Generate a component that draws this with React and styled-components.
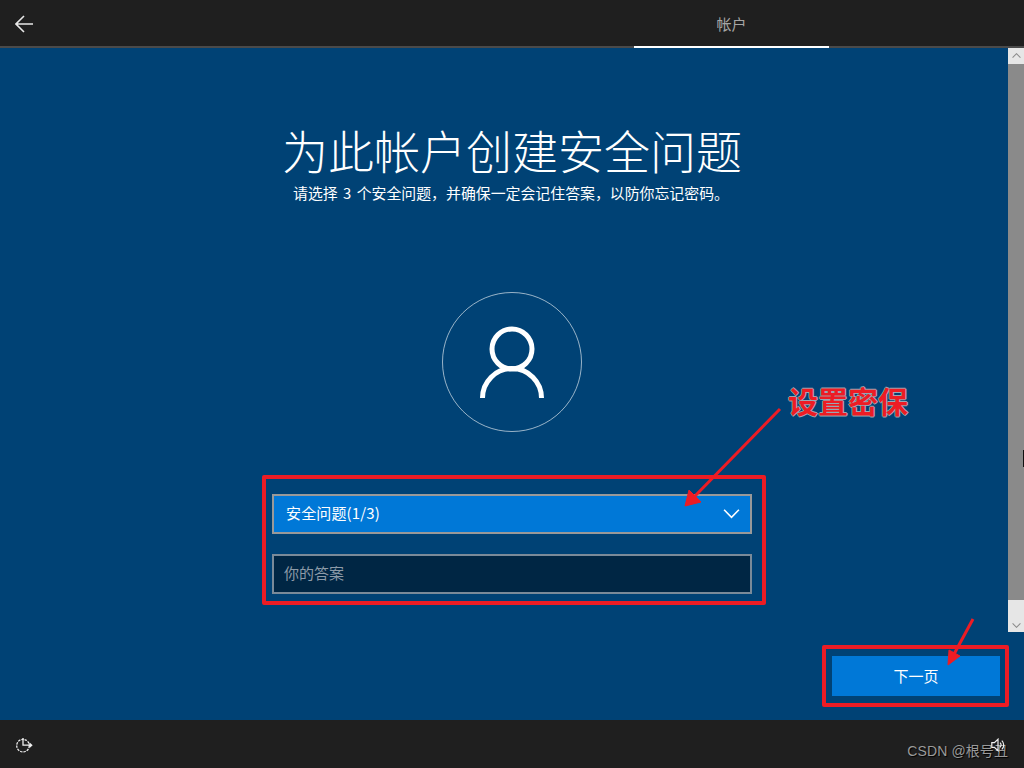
import React from 'react';
import styled, { createGlobalStyle } from 'styled-components';

const FONT = '"Noto Sans CJK SC", "Liberation Sans", sans-serif';
const RED = '#ed1c24';

const GlobalStyle = createGlobalStyle`
    html, body {
        margin: 0;
        padding: 0;
        background: #004275;
    }
    * {
        box-sizing: border-box;
    }
`;

const Page = styled.div`
    position: relative;
    width: 1024px;
    height: 768px;
    overflow: hidden;
    display: flex;
    flex-direction: column;
    background: #004275;
    color: #fff;
    font-family: ${FONT};
`;

const TopBar = styled.header`
    height: 48px;
    flex: none;
    display: flex;
    background: #1f1f1f;
    border-bottom: 2px solid #4a4a4a;
`;

const BackButton = styled.div`
    width: 48px;
    padding-top: 2px;
    display: flex;
    align-items: center;
    justify-content: center;
    color: #e8e8e8;
`;

const Tabs = styled.nav`
    margin-left: 586px;
    display: flex;
`;

const Tab = styled.div`
    width: 195px;
    height: 48px;
    margin-bottom: -2px;
    display: flex;
    align-items: center;
    justify-content: center;
    font-size: 15px;
    color: #a6a6a6;
    border-bottom: 2px solid #fff;
`;

const Body = styled.div`
    height: 584px;
    flex: none;
    display: flex;
`;

const Content = styled.main`
    flex: 1;
    display: flex;
    flex-direction: column;
    align-items: center;
    padding-top: 68px;
    padding-left: 16px;
`;

const Title = styled.h1`
    margin: 0 0 1px;
    font-size: 46px;
    line-height: 66px;
    font-weight: 300;
    white-space: nowrap;
`;

const Subtitle = styled.p`
    margin: 0 2px 0 0;
    font-size: 14.9px;
    line-height: 20px;
    word-spacing: 2px;
    white-space: nowrap;
`;

const Avatar = styled.div`
    width: 140px;
    height: 140px;
    margin-top: 89px;
    border: 1px solid rgba(255, 255, 255, 0.6);
    border-radius: 50%;
    display: flex;
    align-items: center;
    justify-content: center;
`;

const Form = styled.form`
    width: 480px;
    margin-top: 62px;
    display: flex;
    flex-direction: column;
    gap: 20px;
`;

const Select = styled.div`
    height: 40px;
    padding: 0 10px 0 12px;
    display: flex;
    align-items: center;
    justify-content: space-between;
    background: #0078d7;
    border: 2px solid #999;
    font-size: 15px;

    span {
        margin-bottom: 4px;
        letter-spacing: 0.15px;
    }
`;

const Answer = styled.div`
    height: 40px;
    padding: 0 10px 4px;
    display: flex;
    align-items: center;
    background: #002644;
    border: 2px solid #7a8a99;
    font-size: 15px;
    color: #8c9aa8;
`;

const ScrollBar = styled.aside`
    width: 16px;
    display: flex;
    flex-direction: column;
    background: #8a8a8a;
`;

const ScrollButton = styled.div`
    height: ${(p) => p.$height}px;
    display: flex;
    align-items: ${(p) => (p.$down ? 'flex-end' : 'center')};
    justify-content: center;
    padding-bottom: ${(p) => (p.$down ? 4 : 0)}px;
    background: #e6e6e6;
    color: #8a8a8a;
`;

const ScrollThumb = styled.div`
    flex: 1;
`;

const CursorMark = styled.div`
    position: absolute;
    left: 1023px;
    top: 450px;
    width: 1px;
    height: 17px;
    background: #111;
`;

const Footer = styled.div`
    flex: 1;
    display: flex;
    justify-content: flex-end;
    padding: 24px 24px 0 0;
`;

const NextButton = styled.div`
    width: 168px;
    height: 40px;
    padding-bottom: 2px;
    display: flex;
    align-items: center;
    justify-content: center;
    background: #0078d7;
    font-size: 15px;
`;

const BottomBar = styled.footer`
    height: 48px;
    flex: none;
    display: flex;
    align-items: center;
    justify-content: space-between;
    padding: 2px 19px 0 15px;
    background: #1f1f1f;
    color: #f0f0f0;
`;

const TrayIcon = styled.span`
    position: relative;
    z-index: 1;
    display: flex;
`;

const Watermark = styled.span`
    position: absolute;
    right: 16px;
    bottom: 7px;
    font-family: "Liberation Sans", "Noto Sans CJK SC", sans-serif;
    font-size: 14px;
    line-height: 20px;
    letter-spacing: 0.1px;
    color: #9a9a9a;
    text-shadow: 1px 1px 1px #000;
`;

const RedBox = styled.div`
    position: absolute;
    left: ${(p) => p.$x}px;
    top: ${(p) => p.$y}px;
    width: ${(p) => p.$w}px;
    height: ${(p) => p.$h}px;
    border: 4.5px solid ${RED};
    border-radius: 2px;
`;

const Overlay = styled.svg`
    position: absolute;
    left: 0;
    top: 0;
    pointer-events: none;
`;

const Callout = styled.span`
    position: absolute;
    left: 788px;
    top: 378px;
    font-size: 30px;
    line-height: 44px;
    font-weight: 700;
    color: ${RED};
    white-space: nowrap;
    text-shadow: 1px 0 0 #9aa6b4, -1px 0 0 #9aa6b4, 0 1px 0 #9aa6b4, 0 -1px 0 #9aa6b4;
`;

const BackIcon = () => (
    <svg width="18" height="18" viewBox="0 0 18 18" fill="none" stroke="currentColor" strokeWidth="1.6">
        <path d="M18 9H1.4M9 1 1 9l8 8" />
    </svg>
);

const UserIcon = () => (
    <svg width="66" height="74" viewBox="0 0 66 74" fill="none" stroke="#fff" strokeWidth="5">
        <circle cx="33" cy="24" r="20" />
        <path d="M3.5 73a29.5 29.5 0 0 1 59 0" />
    </svg>
);

const Chevron = ({ size = 16, up = false, color = 'currentColor', sw = 1.5 }) => (
    <svg width={size} height={size * 0.56} viewBox="0 0 16 9" fill="none" stroke={color} strokeWidth={sw}>
        <path d={up ? 'M1 8.3 8 1.2l7 7.1' : 'M1 .7 8 7.8l7-7.1'} />
    </svg>
);

const EaseIcon = () => (
    <svg width="18" height="16" viewBox="0 0 18 16" fill="none" stroke="currentColor" strokeWidth="1.3">
        <circle cx="8" cy="8.6" r="6.3" strokeDasharray="2.4 1" />
        <path d="M8 1v7.2h8.5M14.5 6.2l2.2 2-2.2 2" />
    </svg>
);

const SpeakerIcon = () => (
    <svg width="14" height="14" viewBox="0 0 14 14" fill="none" stroke="currentColor" strokeWidth="1.2">
        <path d="M.8 4.6h2.6L7 1.2v11.6L3.4 9.4H.8z" />
        <path d="M9 4.6a3.2 3.2 0 0 1 0 4.8M10.8 2.6a6 6 0 0 1 0 8.8" />
    </svg>
);

const App = () => (
    <Page>
        <GlobalStyle />
        <TopBar>
            <BackButton><BackIcon /></BackButton>
            <Tabs><Tab>帐户</Tab></Tabs>
        </TopBar>
        <Body>
            <Content>
                <Title>为此帐户创建安全问题</Title>
                <Subtitle>请选择 3 个安全问题，并确保一定会记住答案，以防你忘记密码。</Subtitle>
                <Avatar><UserIcon /></Avatar>
                <Form>
                    <Select>
                        <span>安全问题(1/3)</span>
                        <Chevron size={17} color="#fff" />
                    </Select>
                    <Answer>你的答案</Answer>
                </Form>
            </Content>
            <ScrollBar>
                <ScrollButton $height={16}><Chevron size={9} up sw={1.8} /></ScrollButton>
                <ScrollThumb />
                <ScrollButton $height={32} $down><Chevron size={9} sw={1.8} /></ScrollButton>
            </ScrollBar>
        </Body>
        <CursorMark />
        <Footer>
            <NextButton>下一页</NextButton>
        </Footer>
        <BottomBar>
            <TrayIcon><EaseIcon /></TrayIcon>
            <TrayIcon><SpeakerIcon /></TrayIcon>
        </BottomBar>

        <RedBox $x={262} $y={475} $w={504} $h={130} />
        <RedBox $x={822} $y={645} $w={187} $h={62} />
        <Overlay width="1024" height="768" viewBox="0 0 1024 768" fill="none">
            <path d="M780 409 695 496" stroke={RED} strokeWidth="3" />
            <path d="M685 506 689 490 701 502z" fill={RED} stroke={RED} />
            <path d="M973 619 953 656" stroke={RED} strokeWidth="3" />
            <path d="M948 665 949 650 960 656z" fill={RED} stroke={RED} />
        </Overlay>
        <Callout>设置密保</Callout>
        <Watermark>CSDN @根号丑</Watermark>
    </Page>
);

export default App;
